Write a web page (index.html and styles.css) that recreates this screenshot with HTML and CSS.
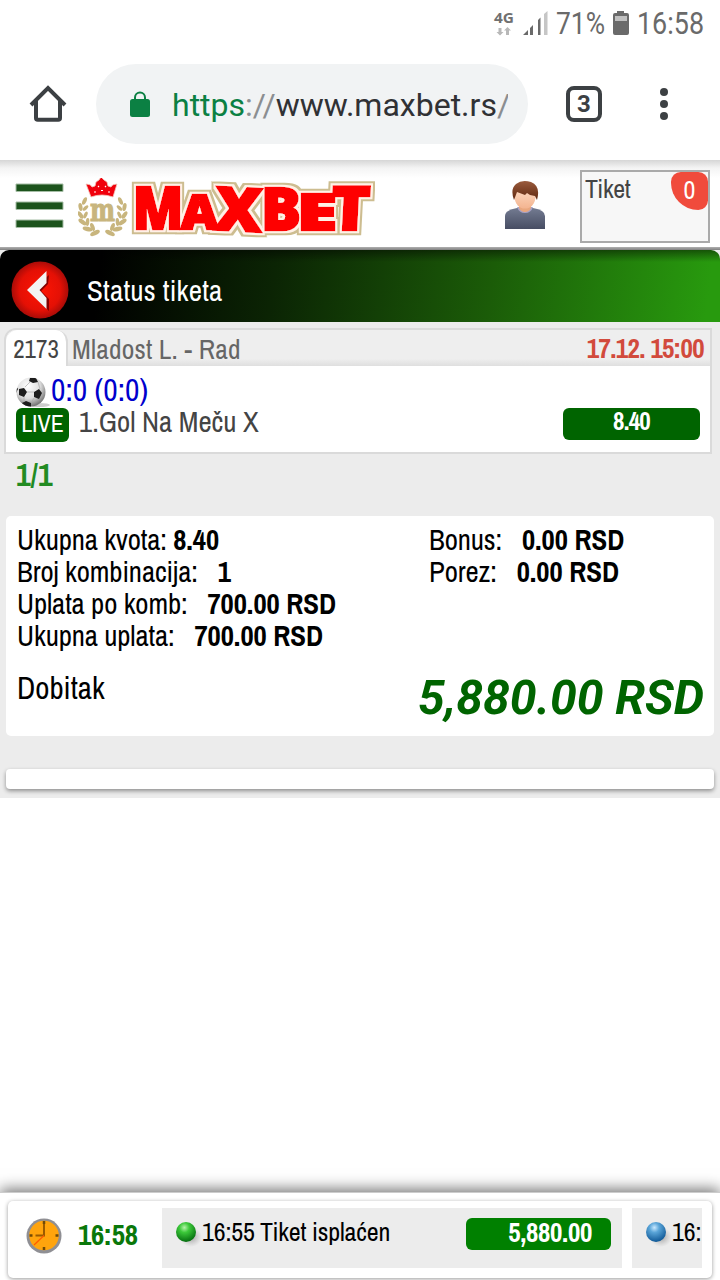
FILE: index.html
```html
<!DOCTYPE html>
<html lang="sr">
<head>
<meta charset="utf-8">
<title>Status tiketa</title>
<link rel="stylesheet" href="styles.css">
</head>
<body>
<div class="screen">
  <div class="statusbar">
    <svg width="230" height="48" viewBox="0 0 230 48">
      <g font-family="Open Sans, Noto Sans, sans-serif" fill="#707070"><text x="4" y="23" font-size="15" font-weight="700" textLength="20" lengthAdjust="spacingAndGlyphs">4G</text></g>
      <path d="M8.500 28h3v4h2l-3.500 3.500L6.500 32h2zM16 35v-4.500h-2l3.500-3.500 3.500 3.500h-2V35z" fill="#b8b8b8"/>
      <path d="M33 35l5-5v5zM40 28l3-3v10h-3zM48 20l2.500-2.500V35H48z" fill="#6a6a6a"/>
      <path d="M54 14l3.500-3v24H54z" fill="#c6c6c6"/>
      <g font-family="Roboto, sans-serif" font-size="31" fill="#6a6a6a">
        <text x="66" y="34" textLength="49" lengthAdjust="spacingAndGlyphs">71%</text>
        <text x="147" y="34" textLength="67" lengthAdjust="spacingAndGlyphs">16:58</text>
      </g>
      <path d="M127 11h7v2h3q2 0 2 2v18q0 2-2 2h-12q-2 0-2-2V15q0-2 2-2h2z" fill="#6a6a6a"/>
      <path d="M125 16h12v5h-12z" fill="#c0c0c0"/>
    </svg>
  </div>
  <div class="toolbar">
    <svg class="home" width="40" height="40" viewBox="0 0 40 40" fill="none" stroke="#3c4043" stroke-width="4"><path d="M3 21L20 4l17 17M8 17v17q0 1.800 1.800 1.800h20.400q1.800 0 1.800-1.800V17"/></svg>
    <div class="url">
      <svg width="20" height="27" viewBox="0 0 20 27"><path d="M5 9V6.500a5 5 0 0 1 10 0V9" fill="none" stroke="#0b8043" stroke-width="2"/><rect y="8" width="20" height="18" rx="2.500" fill="#0b8043"/></svg>
      <div class="address"><span class="secure">https</span><span class="dim">://</span>www.maxbet.rs<span class="dim">/</span></div>
    </div>
    <div class="tabs">3</div>
    <svg class="dots" width="10" height="34" viewBox="0 0 10 34" fill="#3c4043"><circle cx="5" cy="5" r="4"/><circle cx="5" cy="17" r="4"/><circle cx="5" cy="29" r="4"/></svg>
  </div>

  <div class="site-head">
    <svg class="burger" width="50" height="48" viewBox="0 0 50 48"><path d="M2 2h47v7.500H2zM2 20h47v7.500H2zM2 38h47v7.500H2z" fill="#1c531c" stroke="#a5bda5" stroke-width="1"/></svg>
    <svg class="logo" width="304" height="66" viewBox="0 0 304 66">
      <defs>
        <filter id="edge" x="-5%" y="-20%" width="110%" height="140%">
          <feMorphology in="SourceAlpha" operator="dilate" radius="4" result="a"/>
          <feFlood flood-color="#cdbd90"/><feComposite in2="a" operator="in" result="tan"/>
          <feMorphology in="SourceAlpha" operator="dilate" radius="2" result="b"/>
          <feFlood flood-color="#fff1e6"/><feComposite in2="b" operator="in" result="cream"/>
          <feMerge><feMergeNode in="tan"/><feMergeNode in="cream"/><feMergeNode in="SourceGraphic"/></feMerge>
        </filter>
      </defs>
      <g transform="translate(-1 0)" fill="#c8b57d">
        <path d="M14 19L9 6q5 0 6 3l3-1 1-4 3-2 2-3 3 3 3 2 1 4 3 1q1-3 6-3l-4 13q-11-4-22 0z" fill="#f0000c" stroke="#f3c8bd" stroke-width=".8"/>
        <path d="M17 14h2M24 12.500h2M31 14h2M21 8l1 1M28 9l1-1" stroke="#fff" stroke-width="1.200"/>
        <text x="13" y="43" font-family="DejaVu Serif, serif" font-size="32" font-weight="700" stroke="#c8b57d" stroke-width="1.200" textLength="25" lengthAdjust="spacingAndGlyphs">m</text>
        <g id="branch">
          <ellipse cx="7.500" cy="23" rx="2" ry="4" transform="rotate(25 7.500 23)"/>
          <ellipse cx="3.500" cy="29" rx="2" ry="4" transform="rotate(-10 3.500 29)"/>
          <ellipse cx="8.500" cy="30" rx="1.700" ry="3.500" transform="rotate(45 8.500 30)"/>
          <ellipse cx="3.500" cy="37" rx="2" ry="4.200" transform="rotate(-35 3.500 37)"/>
          <ellipse cx="8.500" cy="37" rx="1.700" ry="3.700" transform="rotate(25 8.500 37)"/>
          <ellipse cx="5.500" cy="44" rx="2.200" ry="4.700" transform="rotate(-55 5.500 44)"/>
          <ellipse cx="10.500" cy="44" rx="1.800" ry="4" transform="rotate(5 10.500 44)"/>
          <ellipse cx="10.500" cy="51" rx="2.200" ry="5" transform="rotate(-75 10.500 51)"/>
          <ellipse cx="15.500" cy="49" rx="2" ry="4.200" transform="rotate(-20 15.500 49)"/>
          <ellipse cx="18" cy="55" rx="2.300" ry="5.200" transform="rotate(65 18 55)"/>
        </g>
        <use href="#branch" transform="translate(51 0) scale(-1 1)"/>
      </g>
      <g filter="url(#edge)" font-family="Open Sans, sans-serif" font-weight="800" fill="#fe0000" stroke="#fe0000" stroke-width="2.500">
        <text x="55" y="51" font-size="58" textLength="50" lengthAdjust="spacingAndGlyphs">M</text>
        <text x="103" y="51" font-size="48" textLength="37" lengthAdjust="spacingAndGlyphs">A</text>
        <text font-size="60" textLength="47" lengthAdjust="spacingAndGlyphs" transform="translate(136 51.500) rotate(3)">X</text>
        <text x="183" y="51.500" font-size="59" textLength="40" lengthAdjust="spacingAndGlyphs">B</text>
        <text x="219" y="51.500" font-size="50" textLength="40" lengthAdjust="spacingAndGlyphs">E</text>
        <text font-size="61" textLength="39" lengthAdjust="spacingAndGlyphs" transform="translate(252 51.500) skewX(-3)">T</text>
      </g>
    </svg>
    <svg class="user" width="42" height="50" viewBox="0 0 42 50">
      <defs>
        <linearGradient id="shirt" x2="0" y2="1"><stop stop-color="#737b91"/><stop offset="1" stop-color="#474d63"/></linearGradient>
        <linearGradient id="face" x2="0" y2="1"><stop stop-color="#ffdfc8"/><stop offset="1" stop-color="#f3b490"/></linearGradient>
        <linearGradient id="hair" x2="0" y2="1"><stop stop-color="#9a5b3d"/><stop offset="1" stop-color="#60280f"/></linearGradient>
      </defs>
      <path d="M1 49V36q0-6 12-8h16q12 2 12 8v13z" fill="url(#shirt)"/>
      <path d="M13 27h16q-2 6-8 6t-8-6z" fill="#a8a2c5"/>
      <path d="M15 21h12v7q-2 4-6 4t-6-4z" fill="#e9a77e"/>
      <ellipse cx="21" cy="17" rx="10.500" ry="11.500" fill="url(#face)"/>
      <path d="M10 20Q6 9 12 4q6-5 15-2 10 4 6 18l-2-4-5-1-3-2-2 2-8-3z" fill="url(#hair)"/>
    </svg>
    <div class="ticket"><span class="ticket-label">Tiket</span><span class="count">0</span></div>
  </div>

  <div class="content">
    <div class="titlebar">
      <svg width="60" height="60" viewBox="0 0 60 60">
        <defs><radialGradient id="red"><stop stop-color="#ff1503"/><stop offset=".72" stop-color="#e41005"/><stop offset="1" stop-color="#a90c08"/></radialGradient></defs>
        <circle cx="30" cy="30" r="28.500" fill="url(#red)"/>
        <path d="M39 15l-1 9-7 7 8 8v12L20 32z" fill="#850000"/>
        <path d="M36.500 11v12l-7 7 7 8v11L17 30z" fill="#f3f3f3"/>
      </svg>
      <h1 class="title">Status tiketa</h1>
    </div>

    <div class="match">
      <div class="match-head"><span class="code">2173</span><span class="teams">Mladost L. - Rad</span><span class="date">17.12. 15:00</span></div>
      <div class="match-body">
        <div class="score">
          <svg width="34" height="32" viewBox="0 0 34 32">
            <defs><radialGradient id="ball" cx=".4" cy=".3" r=".7"><stop stop-color="#fff"/><stop offset=".6" stop-color="#ddd"/><stop offset="1" stop-color="#777"/></radialGradient><clipPath id="bc"><circle cx="15" cy="17" r="14.500"/></clipPath></defs>
            <ellipse cx="23" cy="30" rx="11" ry="2" fill="#ccc"/>
            <circle cx="15" cy="17" r="14.500" fill="url(#ball)"/>
            <g clip-path="url(#bc)" fill="#1d1d1d"><path d="M3 14l5-1 3 4-3 5-5-2zM18 17l5-3 3 4-3 6-5-2zM14 3l6 0 2 4-5 1-4-2zM6 28l4-2 5 2v6H8zM0 11l2 3-2 4z"/><path d="M11 17l7 0M9 12l5-5M18 23l-3 5M22 7l2 7M8 22v5" stroke="#aaa" stroke-width=".7"/></g>
          </svg>
          <span class="result">0:0 (0:0)</span>
        </div>
        <div class="pick"><span class="live">LIVE</span><span class="market">1.Gol Na Meču X</span><span class="odd">8.40</span></div>
      </div>
    </div>
    <div class="hits">1/1</div>

    <div class="summary">
      <div class="sums">
        <div class="left">
          <div>Ukupna kvota: <b>8.40</b></div>
          <div>Broj kombinacija:<b class="gap">1</b></div>
          <div>Uplata po komb:<b class="gap">700.00 RSD</b></div>
          <div>Ukupna uplata:<b class="gap">700.00 RSD</b></div>
        </div>
        <div class="right">
          <div>Bonus:<b class="gap">0.00 RSD</b></div>
          <div>Porez:<b class="gap">0.00 RSD</b></div>
        </div>
      </div>
      <div class="payout">
        <span class="payout-label">Dobitak</span>
        <svg width="290" height="54" viewBox="0 0 290 54"><text x="4" y="45" font-family="Roboto, sans-serif" font-size="48" font-weight="700" font-style="italic" fill="#006400" textLength="286" lengthAdjust="spacingAndGlyphs">5,880.00 RSD</text></svg>
      </div>
    </div>
    <div class="empty-card"></div>
  </div>

  <div class="spacer"></div>
  <div class="footer">
    <div class="feed">
      <svg width="36" height="36" viewBox="0 0 36 36">
        <circle cx="18" cy="18" r="17.500" fill="#8f8f94"/><circle cx="18" cy="17.500" r="14.800" fill="#ffa40d"/>
        <path d="M18 3v3M18 29v3M3.500 17.500h3M29.500 17.500h3" stroke="#704a08" stroke-width="2.500"/>
        <path d="M18 6v11.500H9.500" fill="none" stroke="#9a5b00" stroke-width="2"/><path d="M18 17.500L8 27" stroke="#ff5a00" stroke-width="1.200"/>
      </svg>
      <b class="clock">16:58</b>
      <div class="news wide">
        <svg width="28" height="28" viewBox="0 0 28 28"><defs><radialGradient id="g" cx=".42" cy=".28" r=".7"><stop stop-color="#b4f3a9"/><stop offset=".35" stop-color="#3cc93a"/><stop offset="1" stop-color="#077111"/></radialGradient><radialGradient id="s"><stop stop-color="#888" stop-opacity=".8"/><stop offset="1" stop-color="#aaa" stop-opacity="0"/></radialGradient></defs><ellipse cx="17" cy="18" rx="11" ry="10" fill="url(#s)"/><circle cx="12" cy="13" r="10" fill="url(#g)"/></svg>
        <span class="item">16:55 Tiket isplaćen</span>
        <b class="amount">5,880.00</b>
      </div>
      <div class="news narrow">
        <svg width="28" height="28" viewBox="0 0 28 28"><defs><radialGradient id="bl" cx=".42" cy=".28" r=".7"><stop stop-color="#c8e8ff"/><stop offset=".35" stop-color="#5aa5d8"/><stop offset="1" stop-color="#125b99"/></radialGradient></defs><ellipse cx="17" cy="18" rx="11" ry="10" fill="url(#s)"/><circle cx="12" cy="13" r="10" fill="url(#bl)"/></svg>
        <span class="item">16:</span>
      </div>
    </div>
  </div>
</div>
</body>
</html>
```
FILE: styles.css
```css
* { box-sizing: border-box; }
body { margin: 0; background: #fff; font-family: "Liberation Sans Narrow", "Archivo Narrow", "Liberation Sans", sans-serif; }
svg { display: block; flex: none; }
.screen { width: 720px; height: 1280px; overflow: hidden; display: flex; flex-direction: column; background: #fff; }
.statusbar { height: 48px; flex: none; display: flex; justify-content: flex-end; }
.toolbar { height: 112px; flex: none; display: flex; align-items: center; padding-left: 28px; }
.url { width: 432px; height: 80px; margin-left: 28px; padding: 0 20px 0 34px; border-radius: 40px; background: #f1f3f4; display: flex; align-items: center; gap: 22px; }
.address { flex: 1; overflow: hidden; white-space: nowrap; font: 32px/40px Roboto, sans-serif; color: #303134; padding-top: 2px; }
.secure { color: #0b8043; }
.dim { color: #8b8e91; }
.tabs { width: 36px; height: 36px; margin-left: 38px; border: 4px solid #3c4043; border-radius: 8px; font: 700 24px/28px Roboto, sans-serif; color: #3c4043; text-align: center; }
.dots { margin-left: 57px; }

.site-head { height: 90px; flex: none; display: flex; padding: 10px 10px 0 14px; background: linear-gradient(#d6d6d6, #f4f4f4 8px, #fff 18px, #fff 87px, #b0b0b0 87px, #808080 90px); }
.burger { margin-top: 12px; }
.logo { margin: 8px 0 0 14px; }
.user { margin: 10px 0 0 122px; }
.ticket { width: 130px; height: 73px; margin-left: auto; border: 2px solid #aaa; background: #f7f7f7; display: flex; justify-content: space-between; font-size: 26px; line-height: 34px; color: #444; }
.ticket-label { padding-left: 3px; letter-spacing: -.3px; }
.count { width: 37px; height: 38px; border-radius: 10px 10px 10px 28px; background: #f04b3c; color: #fff; text-align: center; line-height: 35px; }

.content { height: 548px; flex: none; background: #ececec; }
.titlebar { height: 72px; display: flex; align-items: center; padding: 8px 10px 0; border-radius: 9px 9px 0 0; background: linear-gradient(to bottom, rgba(0,0,0,.45), transparent 12px), linear-gradient(97deg, #000 14%, #0b2404 38%, #1b5c08 68%, #289a0e 98%); }
.title { margin: 0 0 0 17px; font-size: 29px; line-height: 36px; font-weight: 400; color: #fff; padding-top: 2px; letter-spacing: .25px; }

.match { width: 708px; height: 126px; margin: 6px 0 0 4px; border: 2px solid #dadada; border-radius: 12px 0 0 0; background: #fff; overflow: hidden; }
.match-head { height: 36px; display: flex; background: linear-gradient(#eee 80%, #dfdfdf); line-height: 38px; }
.code { width: 62px; height: 36px; border-radius: 12px 12px 0 0; border-right: 2px solid #dadada; background: #fff; color: #444; font-size: 25px; text-align: center; }
.teams { flex: 1; padding-left: 4px; color: #666; font-size: 27.5px; line-height: 40px; letter-spacing: .2px; }
.date { padding-right: 6px; color: #d24a3c; font-size: 27px; font-weight: 700; letter-spacing: -.6px; line-height: 37px; }
.match-body { height: 86px; padding: 8px 10px 0; }
.score { height: 34px; display: flex; align-items: center; color: #0000cd; font-size: 31.5px; line-height: 32px; padding-bottom: 1px; }
.result { padding: 0 0 2px 1px; letter-spacing: .1px; }
.pick { display: flex; color: #444; }
.live { width: 53px; height: 34px; border-radius: 6px; background: #006400; color: #fff; font-size: 24px; line-height: 31px; text-align: center; }
.market { flex: 1; padding-left: 10px; font-size: 28.8px; line-height: 28px; }
.odd { width: 137px; height: 32px; border-radius: 6px; background: #006400; color: #fff; font-size: 25px; line-height: 27px; font-weight: 700; letter-spacing: -.7px; text-align: center; }
.hits { height: 62px; padding: 4px 0 0 16px; font-size: 32px; line-height: 34px; font-weight: 700; color: #228b22; letter-spacing: 0; }

.summary { width: 708px; height: 220px; margin-left: 6px; padding: 8px 10px 0 11px; border-radius: 5px; background: #fff; }
.sums { height: 128px; display: flex; font-size: 28.8px; line-height: 32px; color: #000; letter-spacing: -.1px; }
.sums b { letter-spacing: 0; }
.left { width: 412px; }
.gap { margin-left: 20px; }
.payout { display: flex; justify-content: space-between; margin-top: 17px; }
.payout-label { font-size: 31px; line-height: 38px; }
.empty-card { width: 708px; height: 20px; margin: 33px 0 0 6px; border-radius: 4px; background: #fff; box-shadow: 0 2px 4px rgba(0,0,0,.4); }

.spacer { flex: 1; background: #fff; }
.footer { position: relative; height: 88px; flex: none; padding: 8px; border-top: 1px solid #ccc; background: #fff; box-shadow: 0 -3px 14px rgba(0,0,0,.55); }
.feed { height: 77px; padding: 7px 10px 0 18px; display: flex; border-radius: 5px; background: #fff; box-shadow: 0 1px 4px rgba(0,0,0,.4); }
.feed > svg { margin-top: 10px; }
.clock { width: 84px; margin-left: 16px; font-size: 29px; line-height: 53px; color: #0a780a; letter-spacing: -.2px; }
.news { height: 60px; flex: none; background: #ececec; display: flex; font-size: 26px; padding: 11px 0 0 12px; overflow: hidden; white-space: nowrap; }
.wide { width: 460px; }
.narrow { width: 70px; margin-left: 10px; }
.item { line-height: 26px; letter-spacing: -.15px; }
.amount { width: 145px; height: 32px; margin: -1px 11px 0 auto; padding-right: 19px; border-radius: 6px; background: #008000; color: #fff; font-size: 27px; line-height: 28px; text-align: right; letter-spacing: -.3px; }
```
